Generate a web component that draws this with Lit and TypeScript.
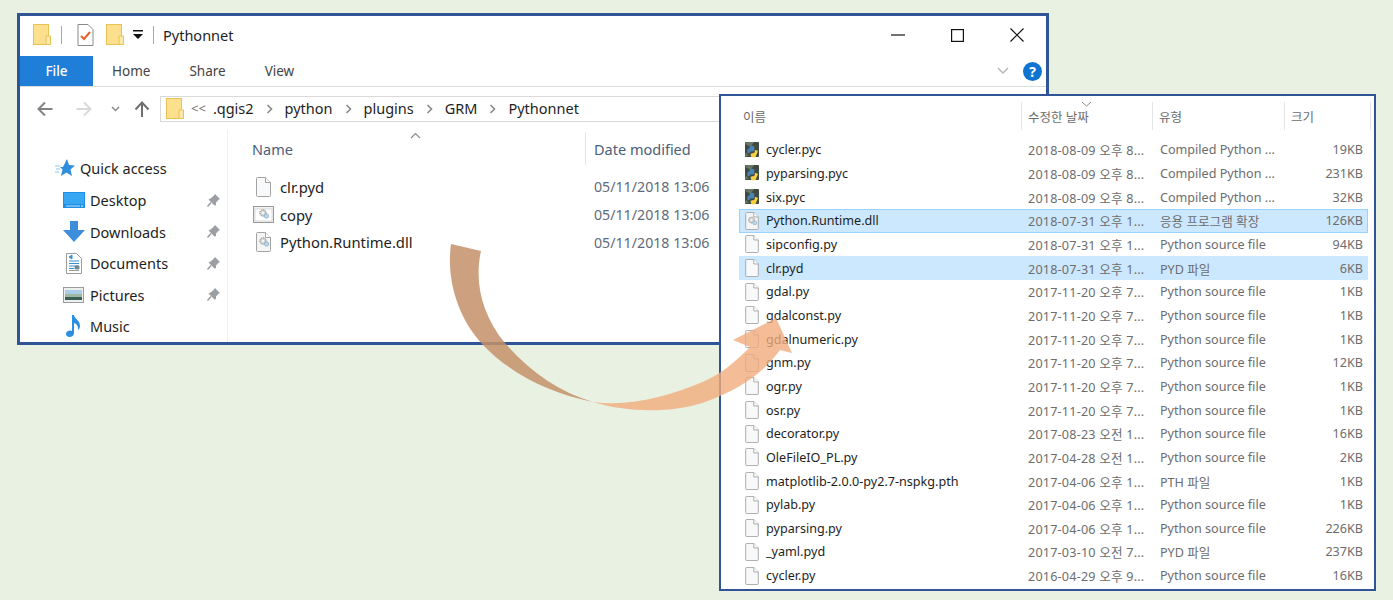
import { LitElement, html, css, svg } from 'lit';
import { customElement } from 'lit/decorators.js';

const folder = html`<svg class="ic-folder" width="18" height="22" viewBox="0 0 18 22">
  <rect x="0.5" y="0.5" width="15" height="20" fill="#fde08d" stroke="#e8c255"/>
  <path d="M13 20.5V12h4.5v8.5z" fill="#fde9ac" stroke="#e8c255"/>
</svg>`;

const blankDoc = html`<svg width="15" height="20" viewBox="0 0 15 20">
  <path d="M1.5.5h8l5 5v13a1 1 0 0 1-1 1h-12a1 1 0 0 1-1-1v-17a1 1 0 0 1 1-1z" fill="#f8f9fa" stroke="#a3a3a3"/>
  <path d="M9.5.5v5h5" fill="#fff" stroke="#a3a3a3"/>
</svg>`;

const gear = svg`<circle cx="7" cy="9" r="3.2" fill="#d6d6d6" stroke="#8a8a8a" stroke-dasharray="1.4 .7"/><circle cx="7" cy="9" r="1" fill="#fff"/><circle cx="10.5" cy="12" r="2.2" fill="#bcd9ee" stroke="#8aa9c0" stroke-width=".7"/>`;

const dllDoc = html`<svg width="15" height="20" viewBox="0 0 15 20">
  <path d="M1.5.5h8l5 5v13a1 1 0 0 1-1 1h-12a1 1 0 0 1-1-1v-17a1 1 0 0 1 1-1z" fill="#f4f5f6" stroke="#a3a3a3"/>
  <path d="M9.5.5v5h5" fill="#fff" stroke="#a3a3a3"/>${gear}
</svg>`;

const shortcutIcon = html`<svg width="21" height="17" viewBox="0 0 21 17">
  <rect x=".5" y=".5" width="20" height="16" fill="#f2f2f2" stroke="#9a9a9a"/>
  <rect x="2" y="3" width="17" height="12" fill="#fff" stroke="#c4c4c4" stroke-width=".6"/>
  <g transform="translate(3 -2)">${gear}</g>
</svg>`;

const pyIcon = html`<svg width="15" height="17" viewBox="0 0 15 17">
  <rect width="15" height="16" rx="1" fill="#3f4a40"/>
  <path d="M0 2l6 3 4-5H2zM1 11l3 4H0z" fill="#6a7668"/>
  <path d="M5 7V5.5C5 4.5 6 4 7.800 4S10 5 10 5.500V8.500C10 9.500 9 10 8 10H6.500C5.500 10 5 10.500 5 11.500V12H3.500C2.800 12 2.500 11 2.500 9.500S3 7 4 7z" fill="#4a83b5"/>
  <path d="M10.500 8.500V10.500C10.500 11.500 9.500 12 8.500 12S6 12 6 13.500 7 16.500 9 16.500 12 15.500 12 14.500 12.500 13 13 12 14 10 13.500 9 12.500 8.500z" fill="#f6cf42"/>
</svg>`;

const chevron = html`<svg class="crumb-sep" width="7" height="10" viewBox="0 0 7 10"><path d="M1.500 1l4 4-4 4" fill="none" stroke="#8a8a8a" stroke-width="1.600"/></svg>`;

const pin = html`<svg width="15" height="15" viewBox="0 0 15 15"><path d="M9 1l5 5-1.500 .8L10 9.500 10 12 8.500 12.500 2.500 6.500 4.500 5.500 7.500 3z" fill="#9b9fa3"/><path d="M5 9.500L1.500 13.500" stroke="#9b9fa3" stroke-width="1.500"/></svg>`;

const navIcons = [
  html`<svg width="16" height="16" viewBox="0 0 16 16"><path d="M15.500 8H2M8 1.500L1.500 8 8 14.500" fill="none" stroke="#838383" stroke-width="2"/></svg>`,
  html`<svg width="16" height="16" viewBox="0 0 16 16"><path d="M.5 8H14M8 1.500L14.500 8 8 14.500" fill="none" stroke="#d9d9d9" stroke-width="2"/></svg>`,
  html`<svg width="9" height="6" viewBox="0 0 9 6"><path d="M1 1l3.500 3.500L8 1" fill="none" stroke="#8a8a8a" stroke-width="1.500"/></svg>`,
  html`<svg width="16" height="16" viewBox="0 0 16 16"><path d="M8 16V2M1.500 8.500L8 1.500l6.500 7" fill="none" stroke="#6f6f6f" stroke-width="2"/></svg>`,
];

const navItems = [
  {
    label: 'Desktop',
    pinned: true,
    icon: html`<svg width="22" height="16" viewBox="0 0 22 16"><rect width="22" height="16" fill="#1f8fe8"/><rect x="1" y="1" width="20" height="11" fill="#38a7f3"/><path d="M3 14h14" stroke="#bfe3fb"/><path d="M18 14h2" stroke="#fff"/></svg>`,
  },
  {
    label: 'Downloads',
    pinned: true,
    icon: html`<svg width="22" height="22" viewBox="0 0 22 22"><path d="M7 0h8v9h7L11 21 0 9h7z" fill="#3d8fdc"/></svg>`,
  },
  {
    label: 'Documents',
    pinned: true,
    icon: html`<svg width="16" height="21" viewBox="0 0 16 21"><path d="M.5.500h10l5 5v15H.5z" fill="#fff" stroke="#9c9c9c"/><path d="M3 4l3-2v4zM3 8h10M3 10.500h10M3 13h10M3 15.500h5" stroke="#3c8fd0" fill="#3c8fd0"/><path d="M9 13h4v3H9zM3 17.500h10" fill="#74878f" stroke="#74878f" stroke-width=".8"/></svg>`,
  },
  {
    label: 'Pictures',
    pinned: true,
    icon: html`<svg width="21" height="16" viewBox="0 0 21 16"><rect x=".5" y=".5" width="20" height="15" fill="#eee" stroke="#9c9c9c"/><rect x="2" y="3" width="17" height="4" fill="#a9cfe8"/><rect x="2" y="7" width="17" height="3" fill="#9fb8a3"/><rect x="2" y="10" width="17" height="3" fill="#3c5f55"/></svg>`,
  },
  {
    label: 'Music',
    pinned: false,
    icon: html`<svg width="16" height="22" viewBox="0 0 16 22"><path d="M6 0h2c.5 4 6 5 6 11 0 2-1 3-2 4 .5-3-1-6-4-7v10c0 2.500-2 4-4.500 4C1.500 22 0 21 0 19s2-3.500 4-3.500c1 0 1.500 .2 2 .5z" fill="#2b8fe2"/></svg>`,
  },
];

const backFiles = [
  { name: 'clr.pyd', icon: blankDoc },
  { name: 'copy', icon: shortcutIcon },
  { name: 'Python.Runtime.dll', icon: dllDoc },
];

const crumbs = ['.qgis2', 'python', 'plugins', 'GRM', 'Pythonnet'];

const SRC = 'Python source file';
const PYC = 'Compiled Python ...';
type Row = [string, string, string, string, string?];
const rows: Row[] = [
  ['cycler.pyc', '2018-08-09 오후 8...', PYC, '19KB', 'py'],
  ['pyparsing.pyc', '2018-08-09 오후 8...', PYC, '231KB', 'py'],
  ['six.pyc', '2018-08-09 오후 8...', PYC, '32KB', 'py'],
  ['Python.Runtime.dll', '2018-07-31 오후 1...', '응용 프로그램 확장', '126KB', 'sel-dll'],
  ['sipconfig.py', '2018-07-31 오후 1...', SRC, '94KB'],
  ['clr.pyd', '2018-07-31 오후 1...', 'PYD 파일', '6KB', 'sel'],
  ['gdal.py', '2017-11-20 오후 7...', SRC, '1KB'],
  ['gdalconst.py', '2017-11-20 오후 7...', SRC, '1KB'],
  ['gdalnumeric.py', '2017-11-20 오후 7...', SRC, '1KB'],
  ['gnm.py', '2017-11-20 오후 7...', SRC, '12KB'],
  ['ogr.py', '2017-11-20 오후 7...', SRC, '1KB'],
  ['osr.py', '2017-11-20 오후 7...', SRC, '1KB'],
  ['decorator.py', '2017-08-23 오전 1...', SRC, '16KB'],
  ['OleFileIO_PL.py', '2017-04-28 오전 1...', SRC, '2KB'],
  ['matplotlib-2.0.0-py2.7-nspkg.pth', '2017-04-06 오후 1...', 'PTH 파일', '1KB'],
  ['pylab.py', '2017-04-06 오후 1...', SRC, '1KB'],
  ['pyparsing.py', '2017-04-06 오후 1...', SRC, '226KB'],
  ['_yaml.pyd', '2017-03-10 오전 7...', 'PYD 파일', '237KB'],
  ['cycler.py', '2016-04-29 오후 9...', SRC, '16KB'],
];

@customElement('app-root')
export class AppRoot extends LitElement {
  static styles = css`
    :host {
      display: block;
      position: relative;
      width: 1393px;
      height: 600px;
      overflow: hidden;
      background: #e9f1e2;
      font-family: 'Noto Sans', 'Noto Sans CJK KR', sans-serif;
      color: #1e1e1e;
    }

    /* the two windows sit on a free canvas */
    .win {
      position: absolute;
      box-sizing: border-box;
      background: #fff;
      border: 3px solid #2f5597;
      overflow: hidden;
    }
    .back {
      left: 17px;
      top: 13px;
      width: 1032px;
      height: 332px;
      display: flex;
      flex-direction: column;
    }
    .front {
      left: 719px;
      top: 94px;
      width: 657px;
      height: 497px;
      border-width: 2px;
      padding: 6px 0 0 18px;
    }

    .titlebar {
      height: 38px;
      margin-bottom: 2px;
      flex: none;
      display: flex;
      align-items: center;
      padding-left: 13px;
      font-size: 14.500px;
    }
    .tb-sep {
      width: 1px;
      height: 18px;
      background: #a8a8a8;
    }
    .caret {
      width: 10px;
      height: 10px;
    }
    .title {
      margin-left: 9px;
    }
    .controls {
      margin-left: auto;
      display: flex;
      align-items: center;
      gap: 46px;
      padding-right: 22px;
    }

    .ribbon {
      height: 30px;
      flex: none;
      display: flex;
      align-items: center;
      font-size: 13.500px;
      color: #444;
      border-bottom: 1px solid #dadbdc;
    }
    .file-tab {
      width: 73px;
      height: 100%;
      display: flex;
      align-items: center;
      justify-content: center;
      background: #1f7ed8;
      color: #fff;
      font-weight: 500;
    }
    .tabs {
      display: flex;
      gap: 39px;
      margin-left: 19px;
    }
    .ribbon-right {
      margin-left: auto;
      display: flex;
      align-items: center;
      gap: 14px;
      padding-right: 4px;
    }

    .nav {
      height: 43px;
      flex: none;
      display: flex;
      align-items: center;
    }
    .nav-btns {
      display: flex;
      align-items: center;
      width: 140px;
      flex: none;
      padding-left: 17px;
      box-sizing: border-box;
    }
    .nav-btns svg:nth-child(1) {
      margin-right: 23px;
    }
    .nav-btns svg:nth-child(2) {
      margin-right: 19px;
    }
    .nav-btns svg:nth-child(3) {
      margin-right: 14px;
    }
    .address {
      flex: 1;
      height: 26px;
      margin-top: 1px;
      box-sizing: border-box;
      border: 1px solid #d9d9d9;
      display: flex;
      align-items: center;
      padding-left: 5px;
      font-size: 14.500px;
    }
    .address span {
      position: relative;
      top: -1px;
    }
    .address .ic-folder {
      margin-right: 7px;
    }
    .chev-back {
      color: #6f6f6f;
      font-size: 13px;
      margin-right: 7px;
    }
    .crumb-sep {
      margin: 0 12px;
    }

    .body {
      flex: 1;
      min-height: 0;
      display: flex;
    }
    .side {
      width: 208px;
      flex: none;
      box-sizing: border-box;
      border-right: 1px solid #f0f0f0;
      padding: 22px 0 0 35px;
      font-size: 14.500px;
    }
    .qa {
      display: flex;
      align-items: center;
      gap: 5px;
      height: 32.500px;
    }
    .nav-item {
      display: flex;
      align-items: center;
      height: 31.500px;
      padding-left: 7px;
    }
    .nav-icon {
      width: 23px;
      flex: none;
      display: flex;
      justify-content: center;
      margin-right: 5px;
    }
    .pin {
      margin-left: auto;
      margin-right: 6px;
      display: flex;
    }

    .list {
      flex: 1;
      position: relative;
      padding: 2px 0 0 24px;
    }
    .list-head {
      position: relative;
      display: grid;
      grid-template-columns: 333px auto;
      align-items: center;
      height: 33px;
      font-size: 14.500px;
      color: #4c607a;
    }
    .list-head .date-col {
      border-left: 1px solid #e5e5e5;
      padding-left: 8px;
      height: 33px;
      display: flex;
      align-items: center;
    }
    .sort-up {
      position: absolute;
      left: 158px;
      top: 0;
    }
    .file {
      display: grid;
      grid-template-columns: 28px 314px auto;
      align-items: center;
      height: 27.700px;
      font-size: 14.800px;
    }
    .list-head + .file {
      margin-top: 8px;
    }
    .file-icon {
      display: flex;
      justify-content: center;
      width: 23px;
    }
    .file-date {
      color: #5f6b78;
      font-size: 14.200px;
    }

    .det-head {
      display: grid;
      grid-template-columns: 282px 131px 132px 87px;
      width: 632px;
      height: 28px;
      margin-bottom: 8px;
      align-items: center;
      font-size: 12.500px;
      color: #6d6d6d;
    }
    .det-row {
      display: grid;
      grid-template-columns: 27px 262px 132px 124px 84px;
      width: 629px;
      align-items: center;
      box-sizing: border-box;
      height: 23.670px;
      font-size: 12.600px;
      color: #1e1e1e;
    }
    .det-head .name-col {
      padding-left: 4px;
    }
    .det-head .col {
      position: relative;
      height: 28px;
      display: flex;
      align-items: center;
      border-left: 1px solid #e5e5e5;
      padding-left: 6px;
      box-sizing: border-box;
    }
    .det-head .col:last-child {
      border-right: 1px solid #e5e5e5;
    }
    .sort-down {
      position: absolute;
      left: 59px;
      top: -1px;
    }
    .det-row.sel {
      background: #cce8ff;
    }
    .det-row.focus {
      background: #cce8ff;
      box-shadow: inset 0 0 0 1px #99d1ff;
    }
    .det-icon {
      display: flex;
      justify-content: flex-start;
      padding-left: 6px;
    }
    .det-icon svg {
      width: 14px;
      height: 18px;
    }
    .muted {
      color: #6d6d6d;
      white-space: nowrap;
    }
    .date {
      letter-spacing: 0.2px;
    }
    .size {
      text-align: right;
      padding-right: 5px;
    }

    /* the arrow crosses both windows */
    .arrow {
      position: absolute;
      inset: 0;
      pointer-events: none;
    }
  `;

  render() {
    return html`
      <div class="win back">
        <div class="titlebar">
          ${folder}
          <span class="tb-sep" style="margin:0 15px 0 10px"></span>
          <svg width="17" height="22" viewBox="0 0 17 22"><path d="M1 .5h10l5 5V21.500H1z" fill="#fff" stroke="#8a8a8a"/><path d="M4 12l3 3 6-7" fill="none" stroke="#e8602c" stroke-width="2"/></svg>
          <span style="width:12px"></span>
          ${folder}
          <svg class="caret" style="margin:0 10px 0 9px" viewBox="0 0 10 10"><path d="M0 0h10v1.500H0zM0 4h10L5 9z" fill="#111"/></svg>
          <span class="tb-sep"></span>
          <span class="title">Pythonnet</span>
          <div class="controls">
            <svg width="14" height="14" viewBox="0 0 14 14"><path d="M0 7h14" stroke="#111" stroke-width="1.200"/></svg>
            <svg width="13" height="13" viewBox="0 0 13 13"><rect x=".6" y=".6" width="11.800" height="11.800" fill="none" stroke="#111" stroke-width="1.200"/></svg>
            <svg width="14" height="14" viewBox="0 0 14 14"><path d="M.5 .5l13 13M13.500 .5l-13 13" stroke="#111" stroke-width="1.200"/></svg>
          </div>
        </div>
        <div class="ribbon">
          <div class="file-tab">File</div>
          <div class="tabs"><span>Home</span><span>Share</span><span>View</span></div>
          <div class="ribbon-right">
            <svg width="12" height="8" viewBox="0 0 12 8"><path d="M1 1l5 5 5-5" fill="none" stroke="#b4b4b4" stroke-width="1.400"/></svg>
            <svg width="19" height="19" viewBox="0 0 19 19"><circle cx="9.500" cy="9.500" r="9.500" fill="#0f74cf"/><text x="9.500" y="14.500" text-anchor="middle" font-size="14" font-weight="700" fill="#fff">?</text></svg>
          </div>
        </div>
        <div class="nav">
          <div class="nav-btns">${navIcons}</div>
          <div class="address">
            ${folder}
            <span class="chev-back">&lt;&lt;</span>
            ${crumbs.map(
              (c, i) => html`<span>${c}</span>${i < crumbs.length - 1 ? chevron : ''}`
            )}
          </div>
        </div>
        <div class="body">
          <div class="side">
            <div class="qa">
              <svg width="20" height="18" viewBox="0 0 20 18"><path d="M12 0l2 6 6 .5-4.500 4L17 17l-5.500-3.500L6 17l1.500-6.500L5 8h3z" fill="#2f8fdc"/><path d="M0 7h5M1 10h4M0 13h4" stroke="#8cc4ee"/></svg>
              <span>Quick access</span>
            </div>
            ${navItems.map(
              (n) => html`<div class="nav-item">
                <span class="nav-icon">${n.icon}</span>
                <span>${n.label}</span>
                ${n.pinned ? html`<span class="pin">${pin}</span>` : ''}
              </div>`
            )}
          </div>
          <div class="list">
            <div class="list-head">
              <span>Name</span>
              <span class="date-col">Date modified</span>
              <svg class="sort-up" width="11" height="7" viewBox="0 0 11 7"><path d="M1 6l4.500-4.500L10 6" fill="none" stroke="#8a8a8a" stroke-width="1.200"/></svg>
            </div>
            ${backFiles.map(
              (f) => html`<div class="file">
                <span class="file-icon">${f.icon}</span>
                <span>${f.name}</span>
                <span class="file-date">05/11/2018 13:06</span>
              </div>`
            )}
          </div>
        </div>
      </div>

      <div class="win front">
        <div class="det-head">
          <span class="name-col">이름</span>
          <span class="col">수정한 날짜
            <svg class="sort-down" width="11" height="6" viewBox="0 0 11 6"><path d="M1 1l4.500 4L10 1" fill="none" stroke="#8a8a8a"/></svg>
          </span>
          <span class="col">유형</span>
          <span class="col">크기</span>
        </div>
        ${rows.map((r) => this.renderRow(r))}
      </div>

      <svg class="arrow" viewBox="0 0 1393 600">
        <path d="M593 402C625 412 670 414 705 402C745 388 765 370 780 350L792 353L776 318L733 340L750 347C735 362 722 373 705 381C670 396 630 407 593 402Z" fill="#f1ac7d" fill-opacity=".8"/>
        <path d="M451 244L481 251C474 282 482 315 505 343C530 372 560 392 593 402C550 393 512 375 483 345C458 318 446 280 451 244Z" fill="#c4906a" fill-opacity=".85"/>
      </svg>
    `;
  }

  renderRow([name, date, type, size, kind]: Row) {
    const cls = kind === 'sel' ? 'sel' : kind === 'sel-dll' ? 'focus' : '';
    const icon = kind === 'py' ? pyIcon : kind === 'sel-dll' ? dllDoc : blankDoc;
    return html`<div class="det-row ${cls}">
      <span class="det-icon">${icon}</span>
      <span>${name}</span>
      <span class="muted date">${date}</span>
      <span class="muted">${type}</span>
      <span class="muted size">${size}</span>
    </div>`;
  }
}
